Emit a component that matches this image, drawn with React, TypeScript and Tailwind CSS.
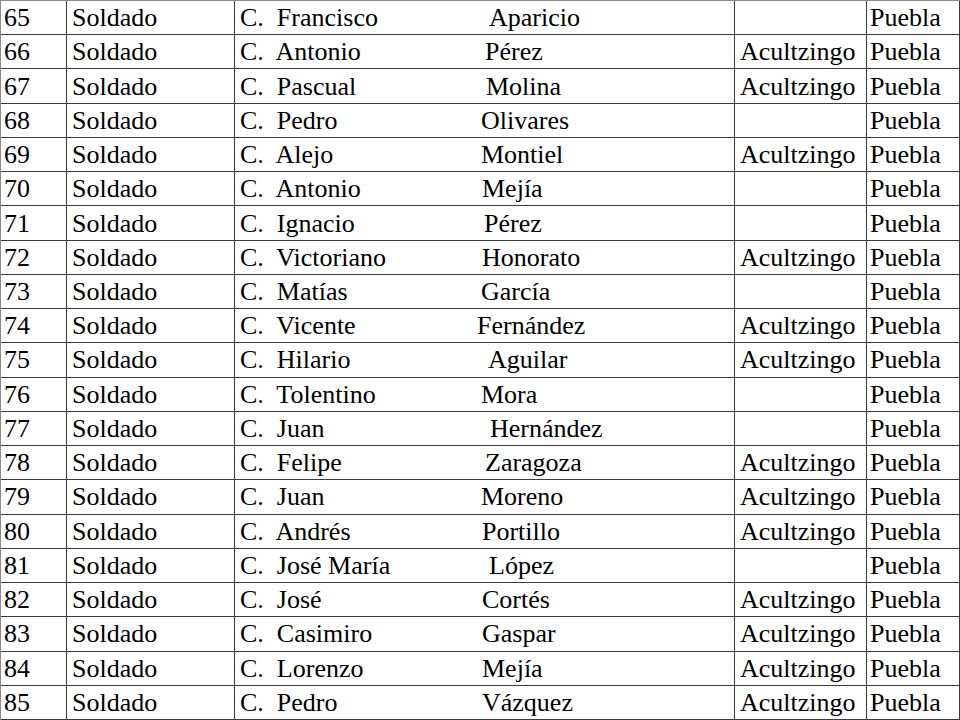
import React from "react";

type Row = {
  n: number;
  first: string;
  last: string;
  lastX: number;
  town: boolean;
};

const rows: Row[] = [
  { n: 65, first: "Francisco", last: "Aparicio", lastX: 489, town: false },
  { n: 66, first: "Antonio", last: "Pérez", lastX: 485, town: true },
  { n: 67, first: "Pascual", last: "Molina", lastX: 486, town: true },
  { n: 68, first: "Pedro", last: "Olivares", lastX: 481, town: false },
  { n: 69, first: "Alejo", last: "Montiel", lastX: 481, town: true },
  { n: 70, first: "Antonio", last: "Mejía", lastX: 482, town: false },
  { n: 71, first: "Ignacio", last: "Pérez", lastX: 484, town: false },
  { n: 72, first: "Victoriano", last: "Honorato", lastX: 482, town: true },
  { n: 73, first: "Matías", last: "García", lastX: 481, town: false },
  { n: 74, first: "Vicente", last: "Fernández", lastX: 477, town: true },
  { n: 75, first: "Hilario", last: "Aguilar", lastX: 488, town: true },
  { n: 76, first: "Tolentino", last: "Mora", lastX: 481, town: false },
  { n: 77, first: "Juan", last: "Hernández", lastX: 490, town: false },
  { n: 78, first: "Felipe", last: "Zaragoza", lastX: 485, town: true },
  { n: 79, first: "Juan", last: "Moreno", lastX: 481, town: true },
  { n: 80, first: "Andrés", last: "Portillo", lastX: 482, town: true },
  { n: 81, first: "José María", last: "López", lastX: 489, town: false },
  { n: 82, first: "José", last: "Cortés", lastX: 482, town: true },
  { n: 83, first: "Casimiro", last: "Gaspar", lastX: 482, town: true },
  { n: 84, first: "Lorenzo", last: "Mejía", lastX: 482, town: true },
  { n: 85, first: "Pedro", last: "Vázquez", lastX: 482, town: true },
];

const cell =
  "flex items-center border-r border-b border-[#3c3c3c] whitespace-pre overflow-hidden pt-[1px]";

export default function App() {
  return (
    <div className="w-[960px] h-[720px] bg-white text-black text-[26px] leading-[26px] font-['Liberation_Serif','Times_New_Roman',serif] border-l border-t border-[#8a8a8a] grid grid-cols-[66px_168px_500px_132px_93px] grid-rows-[repeat(21,minmax(0,1fr))]">
      {rows.map((r) => (
        <React.Fragment key={r.n}>
          <div className={`${cell} pl-[3px]`}>{r.n}</div>
          <div className={`${cell} pl-[5px]`}>Soldado</div>
          <div className={`${cell} pl-[5px]`}>
            <span
              className="inline-block shrink-0"
              style={{ width: r.lastX - 235 - 5 }}
            >
              {"C.  " + r.first}
            </span>
            <span>{r.last}</span>
          </div>
          <div className={`${cell} pl-[5px]`}>{r.town ? "Acultzingo" : ""}</div>
          <div className={`${cell} pl-[3px]`}>Puebla</div>
        </React.Fragment>
      ))}
    </div>
  );
}
